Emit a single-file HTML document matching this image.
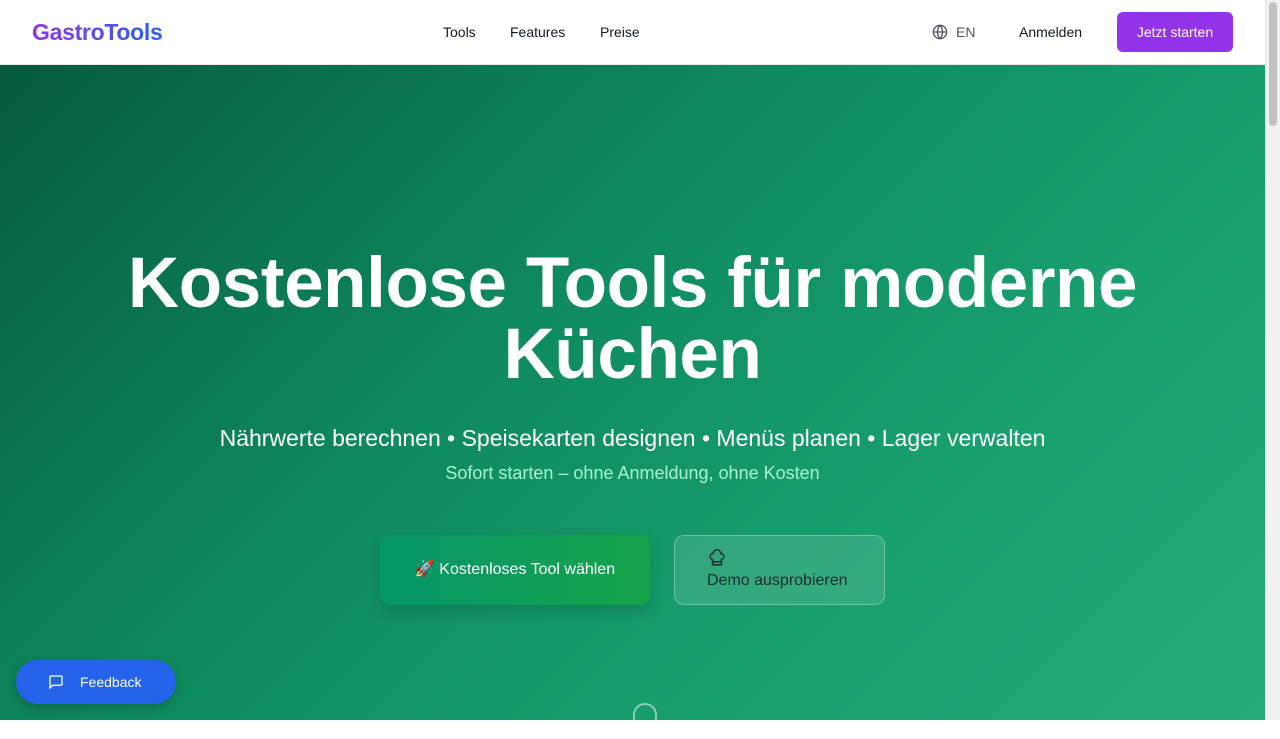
<!DOCTYPE html>
<html><head><meta charset="utf-8"><style>
*{margin:0;padding:0;box-sizing:border-box}
body{width:1280px;height:720px;overflow:hidden;font-family:"Liberation Sans",sans-serif;background:#fff;position:relative}
.sb{position:absolute;right:0;top:0;width:15px;height:720px;background:#f1f1f1;border-left:1px solid #e5e5e5}
.sb i{position:absolute;left:3px;top:2px;width:8px;height:124px;background:#c1c1c1;border-radius:4px}
header{position:absolute;left:0;top:0;width:1265px;height:65px;background:#fff;border-bottom:1px solid #e5e7eb}
.logo{position:absolute;left:32px;top:19px;font-size:23px;font-weight:bold;background:linear-gradient(90deg,#9333ea,#2563eb);-webkit-background-clip:text;color:transparent;letter-spacing:-0.3px}
.nav a{position:absolute;top:24px;font-size:14px;color:#111827}
.btn{position:absolute;left:1117px;top:12px;width:116px;height:40px;background:#9333ea;border-radius:6px;color:#fff;font-size:14px;text-align:center;line-height:40px}
.hero{position:absolute;left:0;top:65px;width:1265px;height:655px;background:linear-gradient(135deg,#065a3e 0%,#0e8a5e 40%,#18a06d 70%,#26aa78 100%)}
h1{position:absolute;left:0;width:1265px;top:182px;text-align:center;color:#fff;font-size:71px;line-height:71px;font-weight:bold;letter-spacing:-0.4px}
.sub{position:absolute;left:0;width:1265px;top:425px;text-align:center;color:#fff;font-size:23px}
.sub2{position:absolute;left:0;width:1265px;top:463px;text-align:center;color:#a7f3d0;font-size:18px}
.b1{position:absolute;left:380px;top:535px;width:270px;height:70px;border-radius:10px;background:linear-gradient(90deg,#059669,#16a34a);box-shadow:0 6px 14px rgba(0,0,0,.15);color:#fff;font-size:16px;text-align:center;line-height:70px}
.b2{position:absolute;left:674px;top:535px;width:211px;height:70px;border-radius:10px;background:rgba(255,255,255,.12);border:1px solid rgba(255,255,255,.3);color:#1f2937;font-size:16px}
.fb{position:absolute;left:16px;top:660px;width:160px;height:44px;border-radius:22px;background:#2563eb;color:#fff;font-size:14px;box-shadow:0 4px 10px rgba(0,0,0,.2)}
</style></head><body>
<header>
<div class="logo">GastroTools</div>
<div class="nav"><a style="left:443px">Tools</a><a style="left:510px">Features</a><a style="left:600px">Preise</a>
<svg style="position:absolute;left:932px;top:24px" width="16" height="16" viewBox="0 0 24 24" fill="none" stroke="#4b5563" stroke-width="2"><circle cx="12" cy="12" r="10"/><path d="M2 12h20M12 2a15 15 0 0 1 0 20M12 2a15 15 0 0 0 0 20"/></svg>
<a style="left:956px;color:#4b5563">EN</a><a style="left:1019px">Anmelden</a></div>
<div class="btn">Jetzt starten</div>
</header>
<div class="hero" style="top:65px"></div>
<h1 style="top:248px">Kostenlose Tools für moderne<br>Küchen</h1>
<div class="sub">Nährwerte berechnen • Speisekarten designen • Menüs planen • Lager verwalten</div>
<div class="sub2">Sofort starten – ohne Anmeldung, ohne Kosten</div>
<div class="b1">🚀 Kostenloses Tool wählen</div>
<div class="b2"><svg style="position:absolute;left:33px;top:13px" width="18" height="18" viewBox="0 0 24 24" fill="none" stroke="#1f2937" stroke-width="2"><path d="M6 13.9A4 4 0 0 1 7 6a5 5 0 0 1 10 0 4 4 0 0 1 1 7.9V21H6z M6 17h12"/></svg><span style="position:absolute;left:32px;top:36px">Demo ausprobieren</span></div>
<div style="position:absolute;left:633px;top:703px;width:24px;height:36px;border:2px solid rgba(255,255,255,.5);border-radius:12px"></div>
<div class="fb"><svg style="position:absolute;left:32px;top:14px" width="16" height="16" viewBox="0 0 24 24" fill="none" stroke="#fff" stroke-width="2"><path d="M21 15a2 2 0 0 1-2 2H7l-4 4V5a2 2 0 0 1 2-2h14a2 2 0 0 1 2 2z"/></svg><span style="position:absolute;left:64px;top:14px">Feedback</span></div>
<div class="sb"><i></i></div>
</body></html>
